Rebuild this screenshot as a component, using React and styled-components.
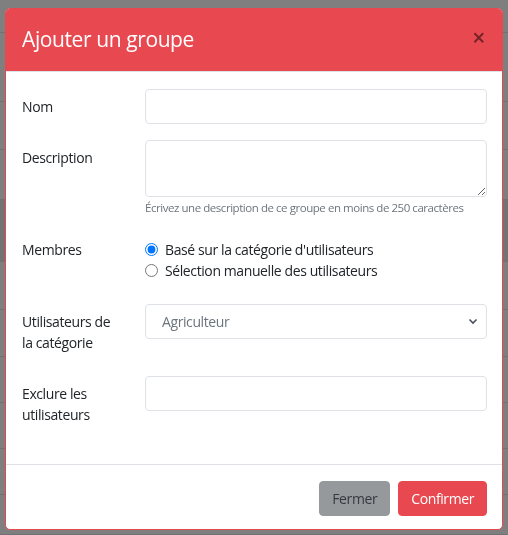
import React from 'react';
import styled, { createGlobalStyle } from 'styled-components';

const GlobalStyle = createGlobalStyle`
  html, body {
    margin: 0;
    padding: 0;
  }
  body {
    background: #fff;
    font-family: 'Open Sans', 'Noto Sans', sans-serif;
    font-size: 14px;
    letter-spacing: -0.4px;
    color: #212529;
    overflow: hidden;
  }
  input, select, textarea, button {
    letter-spacing: inherit;
  }
`;

const red = '#e8484f';

const Page = styled.div`
  width: 508px;
  height: 535px;
  overflow: hidden;
`;

const BgRow = styled.div`
  height: ${(p) => p.h}px;
  border-bottom: 1px solid #dee2e6;
  background: ${(p) => (p.hover ? '#e6e6e6' : '#fff')};
  box-sizing: border-box;
`;

const Backdrop = styled.div`
  position: fixed;
  inset: 0;
  background: rgba(0, 0, 0, 0.5);
`;

const Modal = styled.div`
  position: fixed;
  top: 8px;
  left: 5px;
  width: 498px;
  box-sizing: border-box;
  background: #fff;
  border: 1px solid ${red};
  border-radius: 5px;
  overflow: hidden;
`;

const Header = styled.div`
  height: 63px;
  box-sizing: border-box;
  background: ${red};
  border-bottom: 1px solid #dee2e6;
  display: flex;
  align-items: center;
  justify-content: space-between;
  padding: 0 17px 0 16px;
`;

const Title = styled.h4`
  margin: 0;
  font-size: 21px;
  font-weight: 400;
  color: #fff;
  line-height: 1.5;
`;

const Close = styled.button`
  border: 0;
  background: none;
  padding: 0;
  margin-top: -5px;
  font-family: 'Open Sans', sans-serif;
  font-size: 23px;
  font-weight: 600;
  line-height: 1;
  color: #000;
  opacity: 0.5;
  cursor: pointer;
`;

const Body = styled.div`
  padding: 17px 15px 16px 16px;
`;

const FormRow = styled.div`
  display: grid;
  grid-template-columns: 123px 1fr;
  margin-bottom: 16px;
`;

const Label = styled.label`
  padding: 7px 28px 7px 0;
  line-height: 21px;
`;

const Field = styled.div`
  display: flex;
  flex-direction: column;
  position: relative;
`;

const Input = styled.input`
  height: 35px;
  box-sizing: border-box;
  border: 1px solid #dee2e6;
  border-radius: 4px;
  padding: 0 12px;
  font: inherit;
  outline: none;
`;

const TextArea = styled.textarea`
  height: 57px;
  box-sizing: border-box;
  border: 1px solid #dee2e6;
  border-radius: 4px;
  padding: 6px 12px;
  font: inherit;
  outline: none;
  resize: vertical;
`;

const Help = styled.small`
  margin-top: 2px;
  font-size: 11.5px;
  letter-spacing: -0.45px;
  line-height: 17px;
  white-space: nowrap;
  color: #6c757d;
`;

const RadioGroup = styled.div`
  padding: 7px 0;
  display: flex;
  flex-direction: column;
`;

const RadioLine = styled.label`
  display: flex;
  align-items: center;
  line-height: 21px;
  gap: 7px;
  input {
    margin: 0;
    width: 13px;
    height: 13px;
  }
`;

const Select = styled.select`
  height: 35px;
  box-sizing: border-box;
  border: 1px solid #dee2e6;
  border-radius: 4px;
  padding: 0 28px 0 16px;
  font: inherit;
  color: #6c757d;
  background: #fff;
  appearance: none;
  outline: none;
`;

const Chevron = styled.svg`
  position: absolute;
  right: 9px;
  top: 14px;
  pointer-events: none;
`;

const Footer = styled.div`
  border-top: 1px solid #dee2e6;
  padding: 16px 15px 13px;
  display: flex;
  justify-content: flex-end;
  gap: 8px;
`;

const Button = styled.button`
  height: 35px;
  padding: 0 12px;
  border: 1px solid ${(p) => (p.primary ? red : '#96999c')};
  background: ${(p) => (p.primary ? red : '#96999c')};
  color: ${(p) => (p.primary ? '#fff' : '#343a40')};
  border-radius: 4px;
  font: inherit;
  cursor: pointer;
`;

const bgRows = [33, 69, 48, 50, 62, 48, 47, 46, 46, 46, 40];

export default function App() {
  return (
    <Page>
      <GlobalStyle />
      {bgRows.map((h, i) => (
        <BgRow key={i} h={h} hover={i === 4} />
      ))}
      <Backdrop />
      <Modal>
        <Header>
          <Title>Ajouter un groupe</Title>
          <Close aria-label="Fermer">×</Close>
        </Header>
        <Body>
          <FormRow>
            <Label>Nom</Label>
            <Field>
              <Input type="text" />
            </Field>
          </FormRow>
          <FormRow>
            <Label>Description</Label>
            <Field>
              <TextArea />
              <Help>Écrivez une description de ce groupe en moins de 250 caractères</Help>
            </Field>
          </FormRow>
          <FormRow>
            <Label>Membres</Label>
            <RadioGroup>
              <RadioLine>
                <input type="radio" name="members" defaultChecked />
                Basé sur la catégorie d'utilisateurs
              </RadioLine>
              <RadioLine>
                <input type="radio" name="members" />
                Sélection manuelle des utilisateurs
              </RadioLine>
            </RadioGroup>
          </FormRow>
          <FormRow>
            <Label>Utilisateurs de la catégorie</Label>
            <Field>
              <Select defaultValue="agriculteur">
                <option value="agriculteur">Agriculteur</option>
              </Select>
              <Chevron width="10" height="7" viewBox="0 0 10 7">
                <path d="M1.5 1.5 L5 5 L8.5 1.5" fill="none" stroke="#4a5057" strokeWidth="1.6" />
              </Chevron>
            </Field>
          </FormRow>
          <FormRow>
            <Label>Exclure les utilisateurs</Label>
            <Field>
              <Input type="text" />
            </Field>
          </FormRow>
        </Body>
        <Footer>
          <Button>Fermer</Button>
          <Button primary>Confirmer</Button>
        </Footer>
      </Modal>
    </Page>
  );
}
